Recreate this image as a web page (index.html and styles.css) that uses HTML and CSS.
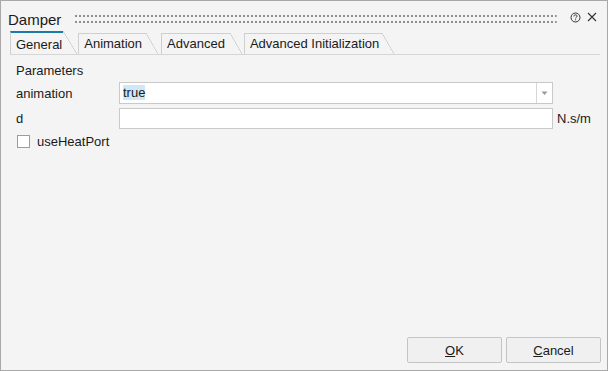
FILE: index.html
```html
<!DOCTYPE html>
<html lang="en">
<head>
    <meta charset="UTF-8">
    <title>Damper</title>
    <link rel="stylesheet" href="styles.css">
</head>
<body>
    <div class="dialog">
        <div class="titlebar">
            <span class="title">Damper</span>
            <svg class="grip" height="8">
                <defs>
                    <pattern id="dots" width="4" height="6" patternUnits="userSpaceOnUse">
                        <rect x="0" y="0" width="2" height="2" fill="#8f8f8f"/>
                    </pattern>
                </defs>
                <rect x="0" y="0" width="100%" height="8" fill="url(#dots)"/>
            </svg>
            <svg class="help" width="11" height="11" viewBox="0 0 11 11">
                <circle cx="5.5" cy="5.5" r="4.5" fill="none" stroke="#333" stroke-width="1"/>
                <path d="M3.9 4.4 C3.9 3.3 4.7 2.9 5.5 2.9 C6.4 2.9 7.1 3.4 7.1 4.2 C7.1 5.1 5.6 5.3 5.6 6.4" fill="none" stroke="#333" stroke-width="1"/>
                <rect x="5.1" y="7.3" width="1" height="1" fill="#333"/>
            </svg>
            <svg class="close" width="10" height="10" viewBox="0 0 10 10">
                <path d="M1 1 L9 9 M9 1 L1 9" stroke="#333" stroke-width="1.1"/>
            </svg>
        </div>

        <div class="tabs">
            <div class="tab active">General</div>
            <div class="tab">Animation</div>
            <div class="tab">Advanced</div>
            <div class="tab">Advanced Initialization</div>
        </div>

        <div class="panel">
            <div class="group-title">Parameters</div>
            <div class="params">
                <label class="param-label">animation</label>
                <div class="combo">
                    <span class="combo-value"><span class="selected">true</span></span>
                    <span class="combo-button">
                        <svg width="7" height="5" viewBox="0 0 7 5"><path d="M0.5 0.5 L3.5 4 L6.5 0.5 Z" fill="#9a9a9a"/></svg>
                    </span>
                </div>
                <span class="unit"></span>

                <label class="param-label">d</label>
                <div class="field"></div>
                <span class="unit">N.s/m</span>
            </div>
            <div class="check-row">
                <span class="checkbox"></span>
                <span>useHeatPort</span>
            </div>
        </div>

        <div class="buttons">
            <button class="btn"><u>O</u>K</button>
            <button class="btn"><u>C</u>ancel</button>
        </div>
    </div>
</body>
</html>
```

FILE: styles.css
```css
html, body {
    margin: 0;
    padding: 0;
}
body {
    font-family: "Liberation Sans", Arial, sans-serif;
    font-size: 13px;
    color: #1a1a1a;
    background-color: #f4f4f4;
}
.dialog {
    width: 608px;
    height: 371px;
    box-sizing: border-box;
    border: 1px solid #a9a9a9;
    background-color: #f4f4f4;
    display: flex;
    flex-direction: column;
}
.titlebar {
    height: 30px;
    display: flex;
    align-items: center;
    padding: 0 10px 0 7px;
    flex-shrink: 0;
}
.title {
    font-size: 15px;
    color: #1a1a1a;
    margin-top: 7px;
}
.grip {
    flex: 1;
    align-self: flex-start;
    min-width: 0;
    height: 8px;
    margin: 14px 13px 0 14px;
}
.help {
    margin-right: 6px;
    margin-top: 2px;
}
.close {
    margin-top: 2px;
}

/* Tabs */
.tabs {
    display: flex;
    align-items: flex-end;
    margin: 0 7px 0 9px;
    height: 23px;
    border-bottom: 1px solid #d6d6d6;
    flex-shrink: 0;
}
.tab {
    position: relative;
    height: 20px;
    line-height: 20px;
    padding: 0 3px 0 5px;
    margin-right: 15px;
    border-top: 1px solid #cfcfcf;
    border-left: 1px solid #cfcfcf;
    color: #1a1a1a;
}
.tab::after {
    content: "";
    position: absolute;
    top: -1px;
    right: -12px;
    width: 12px;
    height: 21px;
    background: linear-gradient(to top right, transparent calc(50% - 0.6px), #c4c4c4 50%, transparent calc(50% + 0.6px));
}
.tab.active {
    height: 21px;
    line-height: 23px;
    border-top: 2px solid #1a7aaa;
    padding-right: 1px;
}
.tab.active::after {
    top: -2px;
    right: -14px;
    width: 14px;
    height: 23px;
}
.tab:nth-child(2) { padding-right: 4px; margin-right: 15px; }
.tab:nth-child(3) { padding-right: 5px; margin-right: 14px; }
.tab:nth-child(4) { padding-right: 3px; }

/* Panel */
.panel {
    flex: 1;
    padding: 8px 0 0 15px;
}
.group-title {
    height: 16px;
    line-height: 16px;
    margin-bottom: 3px;
}
.params {
    display: grid;
    grid-template-columns: 103px 434px 1fr;
    grid-auto-rows: 22px;
    row-gap: 3px;
    align-items: center;
}
.combo {
    height: 22px;
    box-sizing: border-box;
    border: 1px solid #c9c9c9;
    background-color: #fff;
    display: flex;
}
.combo-value {
    flex: 1;
    padding-left: 3px;
    line-height: 20px;
}
.selected {
    background-color: #cde8f6;
}
.combo-button {
    width: 15px;
    border-left: 1px solid #d6d6d6;
    display: flex;
    align-items: center;
    justify-content: center;
}
.field {
    height: 21px;
    box-sizing: border-box;
    border: 1px solid #c9c9c9;
    background-color: #fff;
}
.unit {
    padding-left: 4px;
}
.check-row {
    display: flex;
    align-items: center;
    margin-top: 4px;
    height: 17px;
}
.checkbox {
    width: 11px;
    height: 11px;
    border: 1px solid #9c9c9c;
    background-color: #fff;
    margin: 0 7px 0 1px;
}

/* Buttons */
.buttons {
    display: flex;
    justify-content: flex-end;
    gap: 4px;
    padding: 0 6px 7px 0;
}
.btn {
    width: 95px;
    height: 26px;
    font-family: "Liberation Sans", Arial, sans-serif;
    font-size: 13px;
    color: #1a1a1a;
    background-color: #f0f0f0;
    border: 1px solid #c4c4c4;
    border-radius: 2px;
    padding: 0;
}
```
